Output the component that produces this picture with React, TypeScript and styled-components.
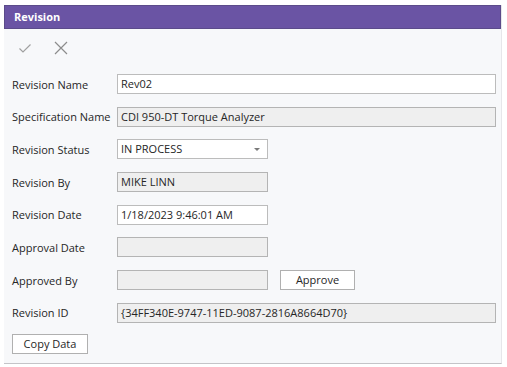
import styled, { createGlobalStyle } from 'styled-components';

const GlobalStyle = createGlobalStyle`
  body {
    margin: 0;
    background: #ffffff;
    font-family: 'Open Sans', 'Noto Sans', sans-serif;
    font-size: 11px;
    color: #262626;
  }
`;

const fields = [
  { label: 'Revision Name', value: 'Rev02', wide: true },
  { label: 'Specification Name', value: 'CDI 950-DT Torque Analyzer', wide: true, readOnly: true },
  { label: 'Revision Status', value: 'IN PROCESS', select: true },
  { label: 'Revision By', value: 'MIKE LINN', readOnly: true },
  { label: 'Revision Date', value: '1/18/2023 9:46:01 AM' },
  { label: 'Approval Date', value: '', readOnly: true },
  { label: 'Approved By', value: '', readOnly: true, approve: true },
  { label: 'Revision ID', value: '{34FF340E-9747-11ED-9087-2816A8664D70}', wide: true, readOnly: true },
];

const App = () => {
  return (
    <>
      <GlobalStyle />
      <Panel>
        <TitleBar>Revision</TitleBar>

        <Toolbar>
          <ToolButton title="Save">
            <svg width="14" height="14" viewBox="0 0 14 14">
              <path d="M1.5 7.5 L5 11 L12.5 3.5" fill="none" stroke="#a0a0a0" strokeWidth="1.2" />
            </svg>
          </ToolButton>
          <ToolButton title="Cancel">
            <svg width="14" height="14" viewBox="0 0 14 14">
              <path d="M1 1 L13 13 M13 1 L1 13" fill="none" stroke="#8c8c8c" strokeWidth="1.2" />
            </svg>
          </ToolButton>
        </Toolbar>

        <Form>
          {fields.map(field => (
            <Row key={field.label}>
              <Label>{field.label}</Label>
              <Field $wide={field.wide} $readOnly={field.readOnly}>
                <span>{field.value}</span>
                {field.select ? <Caret /> : null}
              </Field>
              {field.approve ? <Button $width={75} $gap={12}>Approve</Button> : null}
            </Row>
          ))}
        </Form>

        <Footer>
          <Button $width={76}>Copy Data</Button>
        </Footer>
      </Panel>
    </>
  );
};

const Panel = styled.div`
  margin: 5px 0 0 4px;
  width: 498px;
  height: 359px;
  box-sizing: border-box;
  background: #f7f8fa;
  border-right: 1px solid #e6e6ea;
  border-bottom: 1px solid #c4c4c8;
  display: flex;
  flex-direction: column;
`;

const TitleBar = styled.div`
  height: 24px;
  box-sizing: border-box;
  background: #6a54a4;
  border: 1px solid #5b4b8a;
  color: #ffffff;
  font-weight: 700;
  font-size: 11px;
  line-height: 22px;
  padding-left: 9px;
`;

const Toolbar = styled.div`
  display: flex;
  align-items: center;
  gap: 22px;
  height: 38px;
  padding-left: 14px;
`;

const ToolButton = styled.div`
  width: 14px;
  height: 14px;
  display: flex;
`;

const Form = styled.div`
  display: flex;
  flex-direction: column;
  gap: 12.7px;
  padding: 7px 0 0 8px;
`;

const Row = styled.div`
  display: flex;
  align-items: center;
  height: 20px;
`;

const Label = styled.div`
  width: 105px;
  white-space: nowrap;
`;

const Field = styled.div<{ $wide?: boolean; $readOnly?: boolean }>`
  position: relative;
  width: ${p => (p.$wide ? '379px' : '151px')};
  height: 20px;
  box-sizing: border-box;
  border: 1px solid ${p => (p.$readOnly ? '#b4b4b4' : '#bcbcbc')};
  background: ${p => (p.$readOnly ? '#efefef' : '#ffffff')};
  padding: 0 3px;
  line-height: 18px;
  white-space: nowrap;
  overflow: hidden;
`;

const Caret = styled.span`
  position: absolute;
  right: 7px;
  top: 8px;
  border-left: 3px solid transparent;
  border-right: 3px solid transparent;
  border-top: 3px solid #7a7a7a;
`;

const Button = styled.div<{ $width: number; $gap?: number }>`
  width: ${p => p.$width}px;
  height: 20px;
  box-sizing: border-box;
  margin-left: ${p => p.$gap ?? 0}px;
  border: 1px solid #b0b0b0;
  background: #ffffff;
  text-align: center;
  line-height: 18px;
`;

const Footer = styled.div`
  padding: 11px 0 0 8px;
`;

export default App;
